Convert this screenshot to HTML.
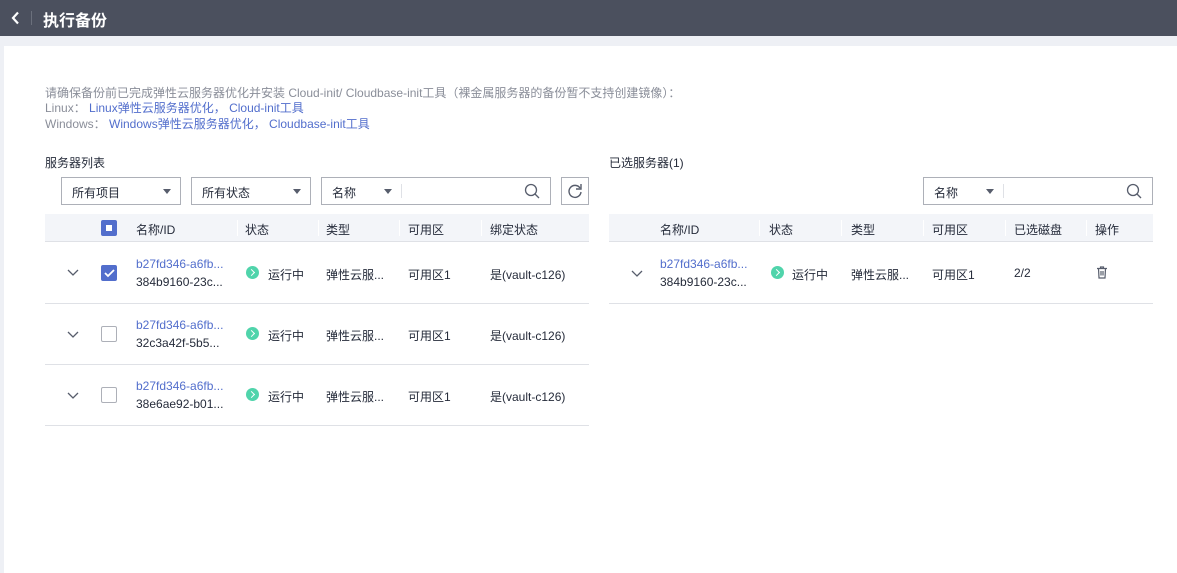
<!DOCTYPE html>
<html><head><meta charset="utf-8"><style>
*{margin:0;padding:0;box-sizing:border-box}
body{width:1177px;height:573px;overflow:hidden;background:#eef0f5;font-family:"Liberation Sans","Noto Sans CJK SC",sans-serif;font-size:12px;color:#252b3a;position:relative}
.hd{position:absolute;left:0;top:0;width:1177px;height:36px;background:#4b505e}
.card{position:absolute;left:4px;top:46px;width:1173px;height:527px;background:#fff}
.a{position:absolute;white-space:nowrap}
.g{color:#8a8e99}
.l{color:#526ecc}
.sel{position:absolute;height:28px;border:1px solid #adb0b8;background:#fff}
.tri{position:absolute;width:0;height:0;border-left:4px solid transparent;border-right:4px solid transparent;border-top:5px solid #575d6c}
.th{position:absolute;height:28px;background:#f3f5f9;border-bottom:1px solid #dfe1e6}
.dv{position:absolute;top:6px;width:1px;height:16px;background:#fff}
.row{position:absolute;height:61px;border-bottom:1px solid #dfe1e6}
.cb{position:absolute;width:16px;height:16px;border:1px solid #adb0b8;border-radius:2px;background:#fff}
.cbon{background:#526ecc;border-color:#526ecc}
.dot{position:absolute;width:13px;height:13px;border-radius:50%;background:#50d4ab}
.dot:after{content:"";position:absolute;left:3px;top:4px;width:4px;height:4px;border-top:1.5px solid #fff;border-right:1.5px solid #fff;transform:rotate(45deg)}
</style></head><body>
<div class="hd">
<svg class="a" style="left:10px;top:11px" width="12" height="14"><path d="M8 1.5L3 7L8 12.5" stroke="#fff" stroke-width="2.2" fill="none"/></svg>
<div class="a" style="left:31px;top:11px;width:1px;height:14px;background:#6b707c"></div>
<div class="a" style="left:43px;top:7px;font-size:16px;font-weight:bold;color:#fff">执行备份</div>
</div>
<div class="card"></div>
<div class="a g" style="left:45px;top:84px">请确保备份前已完成弹性云服务器优化并安装 Cloud-init/ Cloudbase-init工具（裸金属服务器的备份暂不支持创建镜像）：</div>
<div class="a g" style="left:45px;top:99px">Linux： <span class="l">Linux弹性云服务器优化，</span> <span class="l">Cloud-init工具</span></div>
<div class="a g" style="left:45px;top:115px">Windows： <span class="l">Windows弹性云服务器优化，</span> <span class="l">Cloudbase-init工具</span></div>
<div class="a" style="left:45px;top:154px">服务器列表</div>
<div class="a" style="left:609px;top:154px">已选服务器(1)</div>

<div class="sel" style="left:61px;top:177px;width:120px"><span class="a" style="left:10px;top:6px">所有项目</span><i class="tri" style="left:101px;top:11px"></i></div>
<div class="sel" style="left:191px;top:177px;width:120px"><span class="a" style="left:10px;top:6px">所有状态</span><i class="tri" style="left:101px;top:11px"></i></div>
<div class="sel" style="left:321px;top:177px;width:230px"><span class="a" style="left:10px;top:6px">名称</span><i class="tri" style="left:62px;top:11px"></i><i class="a" style="left:79px;top:6px;width:1px;height:14px;background:#dfe1e6"></i>
<svg class="a" style="left:202px;top:5px" width="16" height="16"><circle cx="7" cy="7" r="5.5" stroke="#575d6c" stroke-width="1.3" fill="none"/><path d="M11 11L15 15" stroke="#575d6c" stroke-width="1.3"/></svg></div>
<div class="sel" style="left:561px;top:177px;width:28px"><svg class="a" style="left:5px;top:5px" width="16" height="16"><path d="M13 5A6 6 0 1 0 14 9" stroke="#575d6c" stroke-width="1.4" fill="none"/><path d="M14 1V6H9" stroke="#575d6c" stroke-width="1.4" fill="none"/></svg></div>

<div class="sel" style="left:923px;top:177px;width:230px"><span class="a" style="left:10px;top:6px">名称</span><i class="tri" style="left:62px;top:11px"></i><i class="a" style="left:79px;top:6px;width:1px;height:14px;background:#dfe1e6"></i>
<svg class="a" style="left:202px;top:5px" width="16" height="16"><circle cx="7" cy="7" r="5.5" stroke="#575d6c" stroke-width="1.3" fill="none"/><path d="M11 11L15 15" stroke="#575d6c" stroke-width="1.3"/></svg></div>

<div class="th" style="left:45px;top:214px;width:544px">
<div class="cb cbon" style="left:56px;top:6px"><i class="a" style="left:4px;top:4px;width:6px;height:6px;background:#fff"></i></div>
<span class="a" style="left:91px;top:7px">名称/ID</span><i class="dv" style="left:192px"></i>
<span class="a" style="left:200px;top:7px">状态</span><i class="dv" style="left:273px"></i>
<span class="a" style="left:281px;top:7px">类型</span><i class="dv" style="left:354px"></i>
<span class="a" style="left:363px;top:7px">可用区</span><i class="dv" style="left:436px"></i>
<span class="a" style="left:445px;top:7px">绑定状态</span></div>

<div class="th" style="left:609px;top:214px;width:544px">
<span class="a" style="left:51px;top:7px">名称/ID</span><i class="dv" style="left:150px"></i>
<span class="a" style="left:160px;top:7px">状态</span><i class="dv" style="left:232px"></i>
<span class="a" style="left:242px;top:7px">类型</span><i class="dv" style="left:314px"></i>
<span class="a" style="left:323px;top:7px">可用区</span><i class="dv" style="left:396px"></i>
<span class="a" style="left:405px;top:7px">已选磁盘</span><i class="dv" style="left:477px"></i>
<span class="a" style="left:486px;top:7px">操作</span></div>

<div class="row" style="left:45px;top:243px;width:544px">
<svg class="a" style="left:22px;top:26px" width="12" height="8"><path d="M1 1L6 6L11 1" stroke="#575d6c" stroke-width="1.3" fill="none"/></svg>
<div class="cb cbon" style="left:56px;top:22px"><svg class="a" style="left:1px;top:2px" width="12" height="10"><path d="M2 5L5 8L11 2" stroke="#fff" stroke-width="1.8" fill="none"/></svg></div>
<span class="a l" style="left:91px;top:14px">b27fd346-a6fb...</span><span class="a" style="left:91px;top:32px">384b9160-23c...</span>
<i class="dot" style="left:201px;top:23px"></i><span class="a" style="left:223px;top:23px">运行中</span>
<span class="a" style="left:281px;top:23px">弹性云服...</span><span class="a" style="left:363px;top:23px">可用区1</span><span class="a" style="left:445px;top:23px">是(vault-c126)</span></div>
<div class="row" style="left:45px;top:304px;width:544px">
<svg class="a" style="left:22px;top:27px" width="12" height="8"><path d="M1 1L6 6L11 1" stroke="#575d6c" stroke-width="1.3" fill="none"/></svg>
<div class="cb" style="left:56px;top:22px"></div>
<span class="a l" style="left:91px;top:14px">b27fd346-a6fb...</span><span class="a" style="left:91px;top:32px">32c3a42f-5b5...</span>
<i class="dot" style="left:201px;top:23px"></i><span class="a" style="left:223px;top:23px">运行中</span>
<span class="a" style="left:281px;top:23px">弹性云服...</span><span class="a" style="left:363px;top:23px">可用区1</span><span class="a" style="left:445px;top:23px">是(vault-c126)</span></div>
<div class="row" style="left:45px;top:365px;width:544px">
<svg class="a" style="left:22px;top:27px" width="12" height="8"><path d="M1 1L6 6L11 1" stroke="#575d6c" stroke-width="1.3" fill="none"/></svg>
<div class="cb" style="left:56px;top:22px"></div>
<span class="a l" style="left:91px;top:14px">b27fd346-a6fb...</span><span class="a" style="left:91px;top:32px">38e6ae92-b01...</span>
<i class="dot" style="left:201px;top:23px"></i><span class="a" style="left:223px;top:23px">运行中</span>
<span class="a" style="left:281px;top:23px">弹性云服...</span><span class="a" style="left:363px;top:23px">可用区1</span><span class="a" style="left:445px;top:23px">是(vault-c126)</span></div>

<div class="row" style="left:609px;top:243px;width:544px">
<svg class="a" style="left:22px;top:27px" width="12" height="8"><path d="M1 1L6 6L11 1" stroke="#575d6c" stroke-width="1.3" fill="none"/></svg>
<span class="a l" style="left:51px;top:14px">b27fd346-a6fb...</span><span class="a" style="left:51px;top:32px">384b9160-23c...</span>
<i class="dot" style="left:162px;top:23px"></i><span class="a" style="left:183px;top:23px">运行中</span>
<span class="a" style="left:242px;top:23px">弹性云服...</span><span class="a" style="left:323px;top:23px">可用区1</span><span class="a" style="left:405px;top:23px">2/2</span>
<svg class="a" style="left:487px;top:23px" width="12" height="13"><path d="M1 2.5H11M4.5 2.5V1H7.5V2.5M2.5 2.5L3 12H9L9.5 2.5M5 5V9.5M7 5V9.5" stroke="#575d6c" stroke-width="1.2" fill="none"/></svg></div>
</body></html>
